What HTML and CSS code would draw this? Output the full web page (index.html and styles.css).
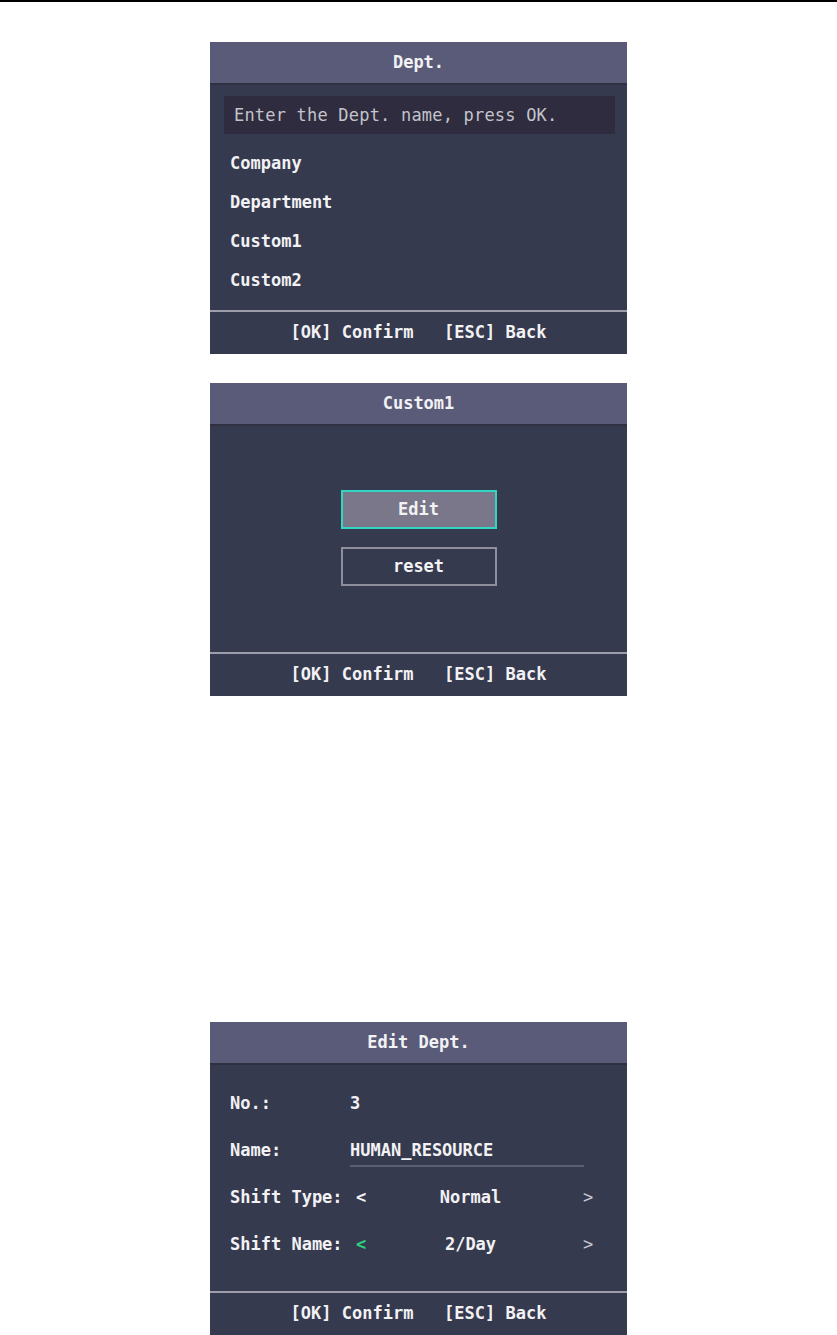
FILE: index.html
```html
<!DOCTYPE html>
<html lang="en">
<head>
<meta charset="utf-8">
<title>Dept. screens</title>
<link rel="stylesheet" href="styles.css">
</head>
<body>
<div class="topline"></div>
<main class="page">
  <section class="panel panel-list">
    <header class="hd">Dept.</header>
    <div class="body">
      <div class="search">Enter the Dept. name, press OK.</div>
      <ul class="list">
        <li>Company</li>
        <li>Department</li>
        <li>Custom1</li>
        <li>Custom2</li>
      </ul>
    </div>
    <footer class="ft">[OK] Confirm   [ESC] Back</footer>
  </section>

  <section class="panel panel-menu">
    <header class="hd">Custom1</header>
    <div class="body menu">
      <div class="btn btn-active">Edit</div>
      <div class="btn">reset</div>
    </div>
    <footer class="ft">[OK] Confirm   [ESC] Back</footer>
  </section>

  <section class="panel panel-edit">
    <header class="hd">Edit Dept.</header>
    <div class="body form">
      <div class="row"><span class="lbl">No.:</span><span class="val">3</span></div>
      <div class="row"><span class="lbl">Name:</span><span class="val field">HUMAN_RESOURCE</span></div>
      <div class="row"><span class="lbl">Shift Type:</span>
        <span class="sel"><span class="arr">&lt;</span><span class="opt">Normal</span><span class="arr arr-r">&gt;</span></span></div>
      <div class="row"><span class="lbl">Shift Name:</span>
        <span class="sel"><span class="arr arr-on">&lt;</span><span class="opt">2/Day</span><span class="arr arr-r">&gt;</span></span></div>
    </div>
    <footer class="ft">[OK] Confirm   [ESC] Back</footer>
  </section>
</main>
</body>
</html>
```

FILE: styles.css
```css
html, body {
  margin: 0;
  padding: 0;
  background: #ffffff;
}

body {
  font-family: "DejaVu Sans Mono", "Liberation Mono", monospace;
  font-size: 17px;
  font-weight: bold;
  color: #f2f2f4;
}

.topline {
  height: 2px;
  background: #000000;
}

.page {
  display: flex;
  flex-direction: column;
  align-items: center;
}

.panel {
  width: 417px;
  display: flex;
  flex-direction: column;
  background: #363a4f;
}

.panel-list {
  margin-top: 40px;
  height: 312px;
}

.panel-menu {
  margin-top: 29px;
  height: 313px;
}

.panel-edit {
  margin-top: 326px;
  height: 313px;
}

.hd {
  height: 41px;
  line-height: 41px;
  background: #5a5b79;
  border-bottom: 2px solid #2f3042;
  text-align: center;
  flex: none;
}

.body {
  flex: 1;
}

.ft {
  flex: none;
  height: 42px;
  line-height: 40px;
  border-top: 2px solid #9c9caa;
  text-align: center;
  white-space: pre;
}

/* list panel */
.panel-list .body {
  padding: 11px 12px 0 14px;
}

.search {
  height: 38px;
  line-height: 38px;
  padding-left: 10px;
  background: #2e2c3e;
  color: #c4c4cc;
  font-weight: normal;
  letter-spacing: 0.2px;
}

.list {
  list-style: none;
  margin: 10px 0 0 0;
  padding: 0 0 0 6px;
}

.list li {
  height: 39px;
  line-height: 39px;
}

/* menu panel */
.menu {
  display: flex;
  flex-direction: column;
  align-items: center;
  gap: 18px;
  padding-top: 64px;
}

.btn {
  box-sizing: border-box;
  width: 156px;
  height: 39px;
  line-height: 35px;
  text-align: center;
  border: 2px solid #8e8e9c;
}

.btn-active {
  background: #797789;
  border-color: #33d6c2;
}

/* edit panel */
.form {
  padding-top: 15px;
}

.row {
  display: flex;
  align-items: flex-start;
  height: 47px;
  padding-left: 20px;
}

.lbl {
  width: 120px;
  line-height: 47px;
  flex: none;
}

.val {
  line-height: 47px;
}

.field {
  width: 234px;
  line-height: 20px;
  margin-top: 13px;
  padding-bottom: 5px;
  border-bottom: 2px solid #5d5e73;
}

.sel {
  display: flex;
  width: 243px;
  line-height: 47px;
}

.arr {
  flex: none;
  width: 10px;
  margin-left: 6px;
}

.arr-on {
  color: #2bd67b;
}

.arr-r {
  margin-left: 0;
  font-weight: normal;
  color: #c9c9d2;
}

.opt {
  flex: 1;
  text-align: center;
  padding-right: 8px;
}
```
